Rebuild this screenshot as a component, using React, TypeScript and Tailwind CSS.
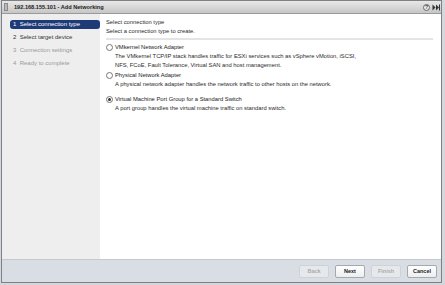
import React from "react";

export default function App() {
  const font = { fontFamily: '"Liberation Sans", Arial, sans-serif' };
  return (
    <div className="w-[445px] h-[285px] bg-[#d4d7db] flex flex-col overflow-hidden" style={font}>
      <div className="flex flex-col flex-1 ml-[1px] mr-[3px] border border-[#7d8085] bg-white">
        {/* title bar */}
        <div className="h-[13px] flex items-center bg-gradient-to-b from-[#e8e8e8] to-[#c6c6c6] border-b border-[#9a9a9a] pl-[2px] pr-[1px]">
          <div className="w-[4px] h-[8px] bg-[#b9b9b9] border border-[#8a8a8a] mr-[6px]"></div>
          <span className="text-[5.6px] font-bold text-[#222]">192.168.155.101 - Add Networking</span>
          <div className="flex-1" />
          <div className="w-[7px] h-[7px] rounded-full border border-[#666] bg-[#eee] flex items-center justify-center text-[5px] font-bold text-[#333] leading-none">?</div>
          <svg width="8" height="7" viewBox="0 0 8 7" className="ml-[2px]">
            <path d="M0.5 0.5 L3.5 3.5 L0.5 6.5 Z" fill="#333" />
            <path d="M4 0.5 L7 3.5 L4 6.5 Z" fill="#333" />
            <rect x="7" y="0.5" width="1" height="6" fill="#333" />
          </svg>
        </div>
        <div className="flex flex-1">
          {/* sidebar */}
          <div className="w-[98px] bg-[#eeeeee] pt-[6px] pl-[8px] flex flex-col gap-[4px] text-[6px]">
            <div className="h-[9px] rounded-[3px] bg-[#1e3b78] text-white flex items-center pl-[3px]">1&nbsp;&nbsp;Select connection type</div>
            <div className="h-[9px] text-[#333] flex items-center pl-[3px]">2&nbsp;&nbsp;Select target device</div>
            <div className="h-[9px] text-[#9a9a9a] flex items-center pl-[3px]">3&nbsp;&nbsp;Connection settings</div>
            <div className="h-[9px] text-[#9a9a9a] flex items-center pl-[3px]">4&nbsp;&nbsp;Ready to complete</div>
          </div>
          {/* content */}
          <div className="flex-1 bg-white pl-[6px] pr-[8px] pt-[4px] text-[5.8px] text-[#2a2a2a]">
            <div className="leading-[9px]">Select connection type</div>
            <div className="leading-[9px]">Select a connection type to create.</div>
            <div className="h-[2px] bg-[#e4e4e4] mt-[2px] mb-[3px]"></div>
            <div className="flex flex-col">
              <Option title="VMkernel Network Adapter" lines={["The VMkernel TCP/IP stack handles traffic for ESXi services such as vSphere vMotion, iSCSI,", "NFS, FCoE, Fault Tolerance, Virtual SAN and host management."]} />
              <div className="h-[1px]" />
              <Option title="Physical Network Adapter" lines={["A physical network adapter handles the network traffic to other hosts on the network."]} />
              <div className="h-[6px]" />
              <Option checked title="Virtual Machine Port Group for a Standard Switch" lines={["A port group handles the virtual machine traffic on standard switch."]} />
            </div>
          </div>
        </div>
        {/* footer */}
        <div className="h-[23px] bg-[#d9dee4] border-t border-[#c4c9cf] flex items-center justify-end gap-[6px] pr-[4px] text-[5.5px] font-bold">
          <Btn label="Back" disabled />
          <Btn label="Next" />
          <Btn label="Finish" disabled />
          <Btn label="Cancel" />
        </div>
      </div>
      <div className="h-[2px]"></div>
    </div>
  );
}

function Option({ title, lines, checked }: { title: string; lines: string[]; checked?: boolean }) {
  return (
    <div className="flex">
      <div className="w-[7px] h-[7px] rounded-full border border-[#777] bg-white mt-[1px] mr-[2px] flex items-center justify-center shrink-0">
        {checked && <div className="w-[3px] h-[3px] rounded-full bg-[#333]"></div>}
      </div>
      <div className="flex flex-col">
        <div className="leading-[9px] text-[#1a1a1a]">{title}</div>
        {lines.map((l, i) => (
          <div key={i} className="leading-[9px] text-[#2a2a2a]">{l}</div>
        ))}
      </div>
    </div>
  );
}

function Btn({ label, disabled }: { label: string; disabled?: boolean }) {
  return (
    <div className={`w-[30px] h-[13px] rounded-[2px] border flex items-center justify-center ${disabled ? "border-[#cfd3d8] bg-[#e6e9ec] text-[#aaa]" : "border-[#a5a9ae] bg-gradient-to-b from-white to-[#eceef0] text-[#222]"}`}>
      {label}
    </div>
  );
}
